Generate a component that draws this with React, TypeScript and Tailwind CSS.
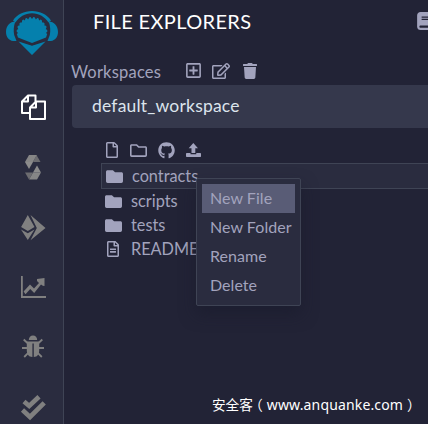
import React from "react";
import { FaRegFile, FaRegFolder, FaGithub, FaRegPlusSquare, FaRegEdit, FaTrash, FaBook, FaFolder, FaRegFileAlt } from "react-icons/fa";

function RemixLogo() {
  return (
    <svg width="52" height="44" viewBox="0 0 52 44" className="ml-[6px] block shrink-0" fill="#0580ad">
      <path d="M7 9.5 C11 3.5 18 0 26 0 C34 0 41 3.5 45 9.5 L42.5 11.5 C39 6 33 2.2 26 2.2 C19 2.2 13 6 9.5 11.5 Z" />
      <path d="M9.3 10.5 C7.6 15 7.4 20 8.2 24 L10.5 30 H7 C3 29.5 0 26 0 21 C0 15 4 10.5 9.3 10.5 Z" />
      <path d="M42.7 10.5 C44.4 15 44.6 20 43.8 24 L41.5 30 H45 C49 29.5 52 26 52 21 C52 15 48 10.5 42.7 10.5 Z" />
      <path d="M12 26.5 L10.8 23 L12 22 L10.6 20.5 L10.8 19 L12.2 18 L11.4 16 L12 14.8 L13.6 14.6 L13.4 12.4 L14.4 11.4 L15.8 11.6 L16.2 9.3 L17.4 8.6 L18.8 9.6 L19.6 7.3 L20.8 6.9 L22.1 8.4 L23.4 6.3 L24.6 6.1 L26 8 L27.4 6.1 L28.6 6.3 L29.9 8.4 L31.2 6.9 L32.4 7.3 L33.2 9.6 L34.6 8.6 L35.8 9.3 L36.2 11.6 L37.6 11.4 L38.6 12.4 L38.4 14.6 L40 14.8 L40.6 16 L39.8 18 L41.2 19 L41.4 20.5 L40 22 L41.2 23 L40 26.5 L26 32 Z" />
      <path d="M12.5 30.5 L26 34.8 L39.5 30.5 L26 44 Z" />
      <path d="M11.5 28.7 L26 33.5 L40.5 28.7" fill="none" stroke="#2a2c3f" strokeWidth="1.3" />
    </svg>
  );
}

function Pages() {
  return (
    <svg width="26" height="26" viewBox="0 0 26 26" fill="none" stroke="#fff" strokeWidth="2" strokeLinejoin="round">
      <path d="M9.5 19 H2 V7.5 L8 1.5 H15.5 V7.5 M8 1.5 V7.5 H2" />
      <path d="M16 7.5 H25 V25 H10 V13.5 Z M16 7.5 V13.5 H10" />
    </svg>
  );
}

function Solidity() {
  return (
    <svg width="16" height="26" viewBox="0 0 16 26">
      <path fill="#868686" d="M4 1 H12 L8 8 H0Z" />
      <path fill="#6c6c70" d="M11.5 1 L15.5 8 H8Z" />
      <path fill="#8c8c8c" d="M0 8 H8 L4 15Z" />
      <path fill="#868686" d="M12 25.5 H4 L8 18.5 H16Z" />
      <path fill="#6c6c70" d="M4 25.5 L0 18.5 H8Z" />
      <path fill="#8c8c8c" d="M16 18.5 H8 L12 11.5Z" />
    </svg>
  );
}

function Deploy() {
  return (
    <svg width="26" height="26" viewBox="0 0 26 26" fill="#808080">
      <path d="M7.8 0 L14.5 12 L7.8 16 L1.1 12 Z M1 14.5 L7.8 18.3 L14.5 14.5 L7.8 25 Z M10.5 0 L25.5 13 L10.5 25.2 L16.8 13 Z" />
    </svg>
  );
}

function Analysis() {
  return (
    <svg width="26" height="24" viewBox="0 0 26 24" fill="#808080">
      <path d="M1 0 H2.8 V20 H26 V22 H1Z" />
      <path d="M3.6 15.5 L10 8.6 L14 12.4 L19 7.1 L17 5 V3 L24.5 2 V10 L22.8 9.8 L21 8.6 L14.2 17 L10.2 13 L5.5 18.2Z" />
    </svg>
  );
}

function Bug() {
  return (
    <svg width="24" height="24" viewBox="0 0 24 24" fill="#808080" stroke="#808080">
      <path stroke="none" d="M7.8 5 C7.8 2.4 9.6 .5 12 .5 C14.4 .5 16.2 2.4 16.2 5Z M5.8 6.5 H18.2 V15 C18.2 19.5 16.3 21.8 12.8 22 V8.5 H11.4 V22 C7.8 21.8 5.8 19.5 5.8 15Z" />
      <path fill="none" strokeWidth="1.8" d="M2.7 4.5 L7 8.5 M21.3 4.5 L17 8.5 M1 13 H7 M23 13 H17 M3.2 22 L7.5 17.7 M20.8 22 L16.5 17.7" />
    </svg>
  );
}

function Checks() {
  return (
    <svg width="26" height="26" viewBox="0 0 26 26" fill="none" stroke="#808080" strokeWidth="4.6">
      <path d="M4 6.5 L9.2 11 L19 1.8" />
      <path d="M2.5 15 L10 22 L24.2 7.8" />
    </svg>
  );
}

function Upload() {
  return (
    <svg width="15" height="16" viewBox="0 0 15 16" fill="#a2a3bd">
      <path d="M7.3 1 L12 6.3 H9.3 V11 H5.5 V6.3 H2.7Z M1 11 H4.5 V12.3 H10.3 V11 H14 C14.6 11 15 11.3 15 12 V14.2 C15 14.8 14.6 15 14 15 H1 C.4 15 0 14.8 0 14.2 V12 C0 11.3 .4 11 1 11Z" />
    </svg>
  );
}

function FileRow({ name, file = false }: { name: string; file?: boolean }) {
  return (
    <div className="flex h-6 items-center pl-[4px]">
      <span className="flex w-[18px] justify-start">
        {file ? <FaRegFileAlt size={16} /> : <FaFolder size={17} />}
      </span>
      <span className="ml-[8px] text-[16.3px] leading-6">{name}</span>
    </div>
  );
}

export default function App() {
  return (
    <div className="relative flex h-[424px] w-[428px] overflow-hidden bg-[#222336] font-[Lato,'Noto_Sans',sans-serif] text-[#a2a3bd]">
      <aside className="h-full w-16 shrink-0 border-r border-[#3f4455] bg-[#2a2c3f] pt-[11px]">
        <RemixLogo />
        <nav className="ml-[20px] mt-[39px] flex flex-col gap-[34px]">
          <div className="h-[26px]"><Pages /></div>
          <div className="ml-[5px] h-[26px]"><Solidity /></div>
          <div className="h-[26px] pt-px"><Deploy /></div>
          <div className="h-[26px] pt-[2px]"><Analysis /></div>
          <div className="ml-px h-[26px] pt-px"><Bug /></div>
          <div className="h-[26px] pt-px"><Checks /></div>
        </nav>
      </aside>
      <main className="min-w-0 flex-1 overflow-hidden">
        <header className="flex h-[44px] items-center justify-between pl-[29px]">
          <h1 className="-mt-[2px] text-[20px] tracking-[0.35px] text-white">FILE EXPLORERS</h1>
          <FaBook size={18} className="-mr-[6px] -mt-[3px] shrink-0" />
        </header>
        <div className="flex h-[41px] pl-[7px] pt-[16px]">
          <span className="w-[114px] text-[16.5px] leading-6 tracking-[0.2px]">Workspaces</span>
          <FaRegPlusSquare size={17} className="mt-[2px]" />
          <FaRegEdit size={18} className="ml-[10px] mt-[2px]" />
          <FaTrash size={16} className="ml-[12px] mt-[3px]" />
        </div>
        <div className="ml-2 flex h-[43px] items-center rounded-l-sm bg-[#35384c] pl-[20px] text-[17.5px] tracking-[0.2px] text-[#dce4ec]">default_workspace</div>
        <div className="ml-[37px] pt-[14px]">
          <div className="flex h-[21px] items-start pl-[3px]">
            <FaRegFile size={16} />
            <FaRegFolder size={17} className="ml-[10px]" />
            <FaGithub size={17} className="ml-[11px]" />
            <span className="ml-[11px]"><Upload /></span>
          </div>
          <div className="h-[26px] border border-r-0 border-[#3f4455] bg-[#2a2c3f]"><FileRow name="contracts" /></div>
          <FileRow name="scripts" />
          <FileRow name="tests" />
          <FileRow name="README" file />
        </div>
      </main>
      <div className="absolute left-[196px] top-[178px] h-[128px] w-[105px] rounded-[2px] border border-[#3f4455] bg-[#2a2c3f] px-[5px] pt-[5px] text-[16px] tracking-[0.05px] shadow-[0_8px_16px_#191a2b88]">
        <div className="h-[29px] bg-[#595c76] pl-[8px] leading-[27px]">New File</div>
        <div className="h-[29px] whitespace-nowrap pl-[8px] leading-[27px]">New Folder</div>
        <div className="h-[29px] pl-[8px] leading-[27px]">Rename</div>
        <div className="h-[29px] pl-[8px] leading-[27px]">Delete</div>
      </div>
      <div className="absolute left-[212px] top-[395px] flex whitespace-nowrap font-['Noto_Sans','Noto_Sans_CJK_SC',sans-serif] text-[14px] leading-5 text-white">
        <span className="text-[13.6px]">安全客</span>
        <span className="-ml-[4px] mr-[4px]">（</span>
        <span className="tracking-[0.15px]">www.anquanke.com</span>
        <span className="ml-[4px]">）</span>
      </div>
    </div>
  );
}
